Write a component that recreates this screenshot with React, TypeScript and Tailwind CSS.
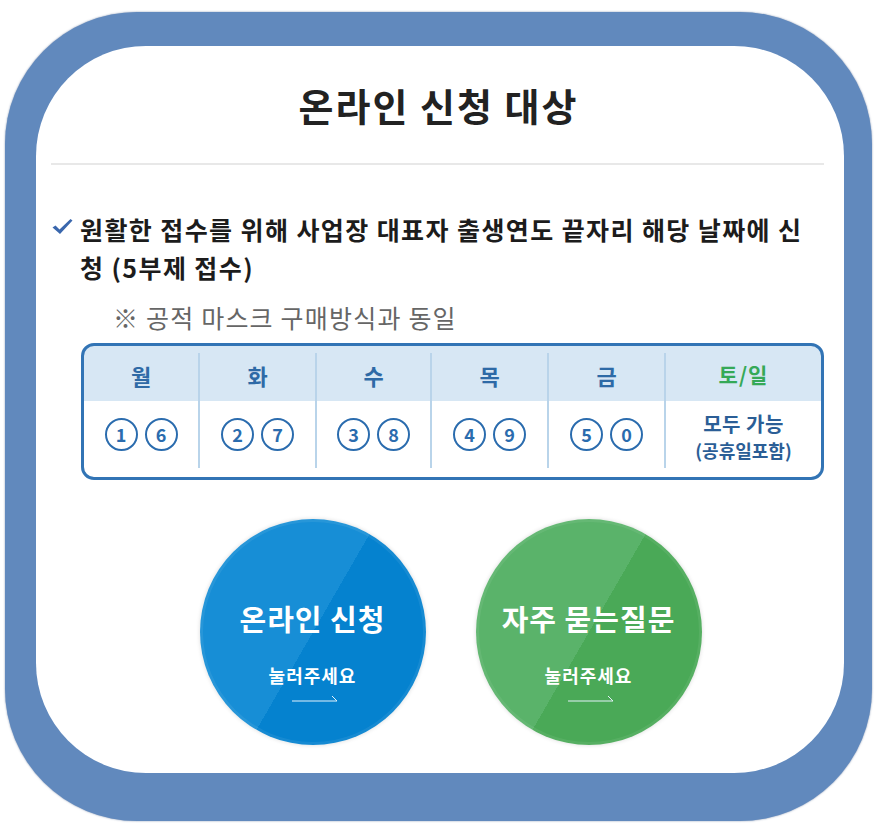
import React from "react";

const days = [
  { label: "월", nums: ["1", "6"] },
  { label: "화", nums: ["2", "7"] },
  { label: "수", nums: ["3", "8"] },
  { label: "목", nums: ["4", "9"] },
  { label: "금", nums: ["5", "0"] },
];

function NumCircle({ n }: { n: string }) {
  return (
    <div className="w-[33px] h-[33px] rounded-full border-2 border-[#2b6cae] flex items-center justify-center text-[18px] font-bold leading-none text-[#2b6cae]">
      {n}
    </div>
  );
}

function Arrow() {
  return (
    <svg width="48" height="9" viewBox="0 0 48 9" className="block">
      <path d="M1 8 H46 L41 3" fill="none" stroke="#e4f1fb" strokeWidth="1" />
    </svg>
  );
}

function BigButton({ title, color }: { title: string; color: string }) {
  return (
    <div
      className={`w-[226px] h-[226px] rounded-full flex flex-col items-center pt-[82px] text-white shadow-[0_0_4px_rgba(0,0,0,0.15),inset_0_0_0_3px_rgba(255,255,255,0.07)] ${color}`}
    >
      <div className="h-[34px] leading-[34px] text-[29px] font-bold whitespace-nowrap tracking-[1px]">{title}</div>
      <div className="mt-[28px] h-[24px] leading-[24px] text-[18px] font-bold tracking-[1px]">눌러주세요</div>
      <div className="mt-[6px] pl-[4px]">
        <Arrow />
      </div>
    </div>
  );
}

export default function App() {
  return (
    <div className="w-[881px] h-[825px] bg-white overflow-hidden pt-[12px] pl-[5px] font-['Noto_Sans_CJK_KR','Noto_Sans',sans-serif]">
      {/* blue frame */}
      <div className="w-[867px] h-[809px] bg-[#6189bd] rounded-[132px] pt-[34px] pl-[31px] pr-[28px] pb-[48px] shadow-[0_0_2px_rgba(40,70,120,0.6)]">
        <div className="w-full h-full bg-white rounded-[110px] pl-[15px] pr-[20px]">
          {/* title */}
          <div className="h-[117px] flex items-center justify-center pl-[2px]">
            <h1 className="text-[38px] font-bold text-[#222] leading-none tracking-[2px]">온라인 신청 대상</h1>
          </div>
          <div className="h-[2px] bg-[#e8e8e8]" />

          {/* bullet */}
          <div className="mt-[45px] flex">
            <div className="w-[29px] pt-[8px] pl-[1px]">
              <svg width="21" height="17" viewBox="0 0 21 17">
                <path d="M0.5 9.5 L3.5 7.5 L7.5 11.5 L18.5 1 L20.5 2.5 L8 16 Z" fill="#3a67ad" />
              </svg>
            </div>
            <div className="text-[25px] font-bold text-[#1c1c1c] leading-[38px] tracking-[1.4px]">
              <div className="whitespace-nowrap">원활한 접수를 위해 사업장 대표자 출생연도 끝자리 해당 날짜에 신</div>
              <div className="whitespace-nowrap">청 (5부제 접수)</div>
            </div>
          </div>
          <div className="mt-[16px] ml-[62px] text-[25px] leading-[30px] text-[#666] whitespace-nowrap tracking-[1.2px]">
            ※ 공적 마스크 구매방식과 동일
          </div>

          {/* table */}
          <div className="mt-[11px] ml-[30px] h-[137px] border-[3px] border-[#3274b5] rounded-[13px] overflow-hidden bg-[linear-gradient(to_bottom,#d7e7f4_0px,#d7e7f4_55px,#ffffff_55px)]">
            <div className="grid grid-cols-[114px_117px_115px_117px_117px_1fr] pt-[7px] pb-[9px] h-full">
              {days.map((d, i) => (
                <div key={d.label} className={`flex flex-col ${i > 0 ? "border-l-2 border-[#b9d4ea]" : ""}`}>
                  <div className="h-[48px] flex items-center justify-center pb-[4px] text-[22px] font-bold text-[#2e6aa6]">
                    {d.label}
                  </div>
                  <div className="flex-1 flex items-center justify-center gap-[7px] pb-[1px]">
                    {d.nums.map((n) => (
                      <NumCircle key={n} n={n} />
                    ))}
                  </div>
                </div>
              ))}
              <div className="flex flex-col border-l-2 border-[#b9d4ea]">
                <div className="h-[48px] flex items-center justify-center pb-[4px] text-[21px] font-bold text-[#35a957] tracking-[1px]">
                  토/일
                </div>
                <div className="flex-1 flex flex-col items-center justify-center pt-[3px] text-[#2b5e96] font-bold">
                  <div className="text-[20px] leading-[27px] tracking-[0.5px]">모두 가능</div>
                  <div className="text-[18px] leading-[26px]">(공휴일포함)</div>
                </div>
              </div>
            </div>
          </div>

          {/* buttons */}
          <div className="mt-[39px] pl-[26px] flex justify-center gap-[50px]">
            <BigButton title="온라인 신청" color="bg-[linear-gradient(120deg,#178ed6_50%,#0582cf_50%)]" />
            <BigButton title="자주 묻는질문" color="bg-[linear-gradient(120deg,#5ab36a_50%,#4aa957_50%)]" />
          </div>
        </div>
      </div>
    </div>
  );
}
